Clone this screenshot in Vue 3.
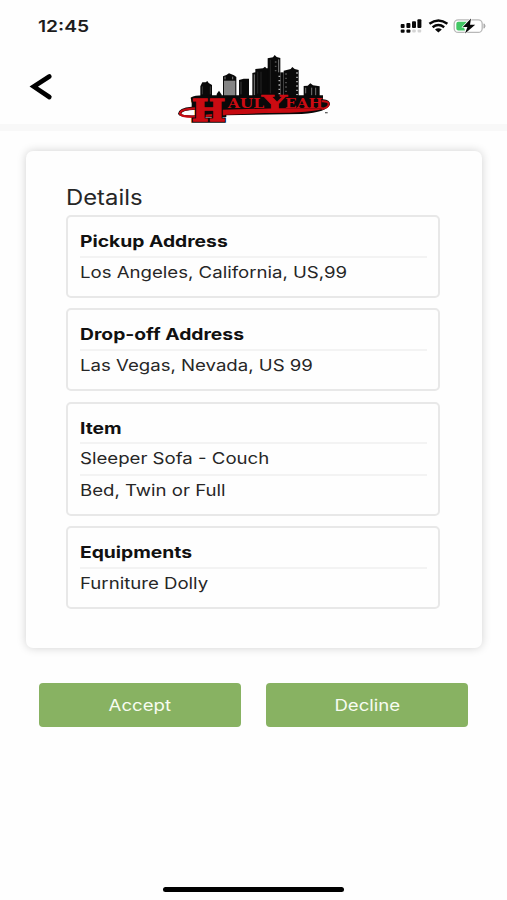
<script setup>
const sections = [
  { title: 'Pickup Address', rows: ['Los Angeles, California, US,99'] },
  { title: 'Drop-off Address', rows: ['Las Vegas, Nevada, US 99'] },
  { title: 'Item', rows: ['Sleeper Sofa - Couch', 'Bed, Twin or Full'] },
  { title: 'Equipments', rows: ['Furniture Dolly'] },
]
</script>

<template>
  <div class="screen">
    <div class="status">
      <span class="time wide">12:45</span>
      <svg class="status-icons" viewBox="0 0 90 20" width="90" height="20">
        <g fill="#080808">
          <rect x="2.700" y="9" width="3.900" height="4" rx="1" />
          <rect x="8.400" y="8" width="4" height="5" rx="1" />
          <rect x="14" y="6.200" width="4" height="6.800" rx="1" />
          <rect x="19.400" y="4.200" width="4" height="8.800" rx="1" />
          <rect x="2.700" y="14.400" width="3.900" height="3.400" rx="1" />
          <rect x="8.400" y="14.400" width="4" height="3.400" rx="1" />
        </g>
        <g fill="#d4d4d4">
          <rect x="14.200" y="14.400" width="3.600" height="3.200" rx="1" />
          <rect x="19.600" y="14.400" width="3.600" height="3.200" rx="1" />
        </g>
        <g fill="none" stroke="#080808" stroke-width="2.400">
          <path d="M31.400 8.800Q40.400 2 49.400 8.800" />
          <path d="M34.600 12.200Q40.400 7.800 46.200 12.200" />
        </g>
        <path d="M37 14.400Q40.400 12 43.800 14.400L40.400 17.400Z" fill="#080808" />
        <rect x="56.200" y="4.800" width="28" height="12.600" rx="4" fill="#fff" stroke="#b8b8b8" stroke-width="1.300" />
        <path d="M60.300 6.800H69L65.500 11L67 15.400H60.300Q58.300 15.400 58.300 13.400V8.800Q58.300 6.800 60.300 6.800Z" fill="#43c865" />
        <path d="M86 8.800Q88.200 11 86 13.200Z" fill="#aaa" stroke="#aaa" />
        <path d="M73 3.400L64.800 11.900H69.400L67 18.500L77.200 9.800H72Z" fill="#080808" stroke="#fff" stroke-width="1.200" paint-order="stroke" />
      </svg>
    </div>

    <header class="header">
      <svg class="back" viewBox="0 0 30 32" width="30" height="32">
        <path d="M22.300 5.500L6.800 15.600L22.300 26" fill="none" stroke="#000" stroke-width="4.700" stroke-linecap="round" stroke-linejoin="miter" />
      </svg>
      <svg class="logo" viewBox="0 0 540 270" width="180" height="90">
        <g fill="#090909">
          <path d="M106 165V124L112 112H122L127 108L131 114L141 120V165Z" />
          <path d="M155 165V147L162 137L170 149V165Z" />
          <path d="M174 165V94L184 90L192 85L207 91L214 96V165Z" />
          <path d="M222 165V105L236 101H252V165Z" />
          <path d="M262 165V84L271 82V72L294 70L300 65L304 70H309V165Z" />
          <path d="M308 165V40L324 37L329 30L335 36L346 39V165Z" />
          <path d="M346 165V82H356V165Z" />
          <path d="M356 165V77L377 72L382 66L389 72L401 75V165Z" />
          <path d="M416 165V123L428 122L436 115L444 121L464 124V165Z" />
        </g>
        <path d="M177 107H211V154H177Z" fill="#858585" />
        <g fill="none" stroke="#bcbcbc" stroke-width="2">
          <path d="M180 95V103M203 95V103" />
          <path d="M268 88V151M341 43V82" />
          <path d="M112 124V148M136 124V148" stroke="#555" />
          <path d="M228 110V148" stroke="#555" />
          <path d="M278 80V146M288 80V146M316 44V145" stroke="#343434" />
          <path d="M422 128V145M440 128V152M452 128V152" stroke="#aaa" />
        </g>
        <g fill="none" stroke="#b0b0b0" stroke-width="5" stroke-dasharray="4 9">
          <path d="M343 92V152M396 82V152" />
          <path d="M363 85V148M332 49V84" stroke="#555" />
        </g>
        <path d="M77 158Q90 150 122 151H474V163Q495 164 495 178Q488 202 410 207L184 211V216H90Q41 218 39 206Q41 188 80 185V172Z" fill="#090909" />
        <path d="M92 194Q50 196 49 206Q51 212 92 211Z" fill="#fefefe" />
        <path d="M92 190Q45 192 45 206Q48 217 96 215L180 207" fill="none" stroke="#c60910" stroke-width="7" />
        <path d="M470 169Q490 168 491 177Q491 188 470 192" fill="none" stroke="#c60910" stroke-width="6" />
        <path d="M170 194L340 190L482 190Q440 205 300 204L170 210Z" fill="#c60910" />
        <g class="logo-text" fill="#cc0b12">
          <text x="80" y="229" font-size="90" textLength="101" lengthAdjust="spacingAndGlyphs" stroke="#090909" stroke-width="10">H</text>
          <text x="80" y="229" font-size="90" textLength="101" lengthAdjust="spacingAndGlyphs" stroke="#cc0b12" stroke-width="4">H</text>
          <text x="188" y="189" font-size="36" textLength="110" lengthAdjust="spacingAndGlyphs">AUL</text>
          <text x="360" y="189" font-size="36" textLength="114" lengthAdjust="spacingAndGlyphs">EAH</text>
          <text x="290" y="197" font-size="66" textLength="76" lengthAdjust="spacingAndGlyphs" stroke="#cc0b12" stroke-width="2">Y</text>
        </g>
        <rect x="480" y="201" width="8" height="4" fill="#666" />
      </svg>
    </header>
    <div class="band"></div>

    <main class="card">
      <h1 class="heading wide">Details</h1>
      <section v-for="s in sections" :key="s.title" class="box">
        <div class="row title"><span class="wide">{{ s.title }}</span></div>
        <div v-for="r in s.rows" :key="r" class="row"><span class="wide">{{ r }}</span></div>
      </section>
    </main>

    <div class="actions">
      <button class="btn"><span class="wide">Accept</span></button>
      <button class="btn"><span class="wide">Decline</span></button>
    </div>
    <div class="home"></div>
  </div>
</template>

<style>
body { background: #fefefe; }
</style>

<style scoped>
.screen {
  box-sizing: border-box;
  width: 507px;
  height: 900px;
  display: flex;
  flex-direction: column;
  overflow: hidden;
  background: #fefefe;
  color: #262626;
  font-family: Inter, "Liberation Sans", sans-serif;
}
.wide {
  display: inline-block;
  white-space: nowrap;
  transform: scaleX(1.163);
  transform-origin: left center;
}
.status {
  flex: none;
  height: 45px;
  box-sizing: border-box;
  display: flex;
  justify-content: space-between;
  align-items: flex-start;
  padding: 15px 19px 0 38px;
}
.time { font-size: 16px; line-height: 22px; font-weight: 600; color: #1c1c1c; transform: scaleX(1.2); }
.header {
  flex: none;
  height: 79px;
  display: flex;
  align-items: flex-start;
}
.back { margin: 26px 108px 0 27px; }
.logo { flex: none; position: relative; z-index: 1; }
.logo-text { font-family: "DejaVu Serif", serif; font-weight: bold; }
.band { flex: none; height: 7px; background: #f8f8f8; }
.card {
  flex: none;
  box-sizing: border-box;
  width: 456px;
  height: 497px;
  margin: 20px 0 0 26px;
  padding: 31px 42px 0 40px;
  border-radius: 7px;
  background: #fefefe;
  box-shadow: 0 0 10px rgba(0, 0, 0, 0.18);
}
.heading {
  display: block;
  height: 33px;
  margin: 0;
  font-size: 21px;
  line-height: 31px;
  font-weight: 400;
  transform: scaleX(1.135);
}
.box {
  box-sizing: border-box;
  border: 2px solid #e8e8e8;
  border-radius: 5px;
  padding: 8px 11px 8.400px 12px;
  margin-bottom: 10.300px;
}
.row {
  box-sizing: border-box;
  height: 31.700px;
  line-height: 29px;
  font-size: 16px;
  border-top: 2px solid #f3f3f3;
}
.row.title { height: 30.900px; border-top: 0; font-weight: 700; color: #111; line-height: 32px; }
.row.title .wide { transform: scaleX(1.205); }
.actions {
  flex: none;
  display: grid;
  grid-template-columns: 202px 202px;
  column-gap: 25px;
  padding: 34.500px 0 0 39px;
}
.btn {
  height: 44.500px;
  padding: 0;
  border: 0;
  border-radius: 4px;
  background: #88b262;
  color: #f7fcf1;
  font: 400 16px/44px Inter, "Liberation Sans", sans-serif;
}
.btn .wide { transform-origin: center; }
.home {
  flex: none;
  width: 181px;
  height: 5px;
  margin: 160px 0 0 163px;
  border-radius: 3px;
  background: #000;
}
</style>
